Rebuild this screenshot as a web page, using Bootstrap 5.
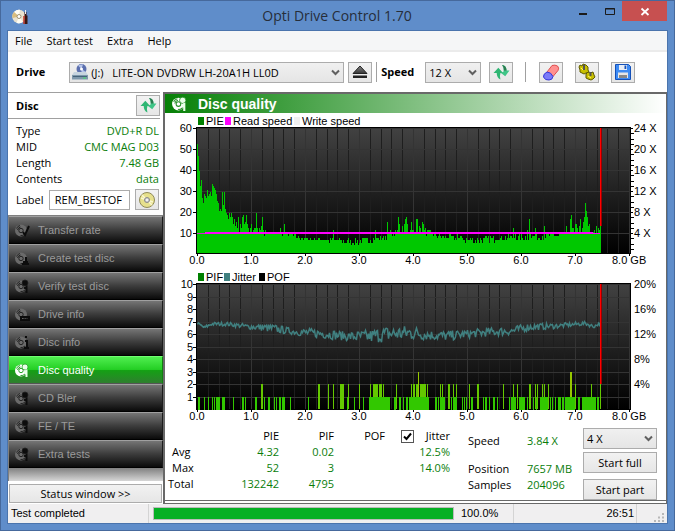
<!DOCTYPE html>
<html lang="en">
<head>
<meta charset="utf-8">
<meta name="viewport" content="width=device-width, initial-scale=1">
<title>Opti Drive Control 1.70</title>
<link rel="stylesheet" href="https://cdn.jsdelivr.net/npm/bootstrap@5.3.0/dist/css/bootstrap.min.css">
<style>
  body { font-family: "Open Sans", "Noto Sans", sans-serif; font-size: 11px; line-height: 16px; color: #000; background: #5f8dca; }
  .app-window { border: 1px solid #46699c; padding: 0 7px 7px; background: #5f8dca; }
  .title-bar { height: 30px; }
  .title-text { font-size: 14px; line-height: 20px; color: #262e3a; padding-left: 80px; }
  .win-btn { border: 0; background: transparent; height: 20px; width: 27px; padding: 0; }
  .win-close { background: #c75050; width: 45px; margin-left: 2px; }
  .client { background: #fff; outline: 1px solid #4a74ad; }
  .menu-bar { background: #f5f6f7; height: 21px; border-bottom: 2px solid #ebebeb; gap: 14px; padding-left: 7px; }
  .menu-bar a { color: #000; text-decoration: none; line-height: 19px; }
  .tool-bar { height: 40px; padding-left: 8px; }
  .tool-btn { width: 24px; height: 21px; border: 1px solid #acacac; background: linear-gradient(#f2f2f2, #e6e6e6); border-radius: 0; padding: 0; display: inline-flex; align-items: center; justify-content: center; flex: none; }
  .tool-sep { width: 1px; height: 20px; background: #a0a0a0; }
  .tool-btn + .tool-sep.wide { margin-left: 12px; }
  .tool-group { gap: 12px; margin-left: 13px; }
  .combo { height: 21px; border: 1px solid #acacac; background: linear-gradient(#f0f0f0, #e5e5e5); }
  .combo .form-select { border: 0; border-radius: 0; padding: 0 16px 0 3px; height: 19px; font-size: 11px; line-height: 19px; color: #000; background-color: transparent; background-size: 9px 7px; background-position: right 3px center;
    background-image: url("data:image/svg+xml,%3Csvg xmlns='http://www.w3.org/2000/svg' viewBox='0 0 9 7'%3E%3Cpath d='M1 1.5l3.5 3.5L8 1.500' fill='none' stroke='%23606060' stroke-width='2'/%3E%3C/svg%3E"); }
  .drive-combo { width: 275px; padding-left: 2px; }
  .speed-combo { width: 56px; margin-left: 11px; }
  .side { width: 155px; flex: none; }
  .side-head { border-top: 1px solid #a0a0a0; border-bottom: 1px solid #a0a0a0; height: 27px; padding-left: 8px; margin-right: 3px; }
  .info { padding: 4px 4px 5px 8px; }
  .info dt { font-weight: 400; }
  .label-row { margin-top: 2px; }
  .val { color: #0a7d0a; }
  .disc-label { width: 81px; height: 20px; border: 1px solid #acacac; border-radius: 0; padding: 0 5px; font-size: 11px; color: #000; }
  .nav-side { border-top: 1px solid #808080; border-left: 1px solid #808080; background: linear-gradient(#808080, #808080 252px, #dcdcdc 266px); flex: 1 1 auto; }
  .nav-item-btn { display: flex; align-items: center; height: 28px; width: 100%; border: 0; border-top: 1px solid #a0a0a0; border-right: 1px solid #1c1c1c; border-bottom: 1px solid #000; padding: 0 0 0 5px; gap: 8px;
    background: linear-gradient(#757575, #3c3c3c 50%, #0a0a0a); color: #9a9a9a; font-family: "Liberation Sans", Arial, sans-serif; font-size: 11px; text-align: left; }
  .nav-item-btn, .pane-icon { --ring: #222; --mark: #0c0c0c; }
  .nav-item-btn svg { color: #6a6a6a; }
  .nav-item-btn.active { background: linear-gradient(#50ee50, #24cf24 48%, #15a015 52%, #2f7f2f); border-color: #70ff70 #108010 #555; color: #fff; }
  .nav-item-btn.active svg { color: #fff; --ring: #27a527; --mark: #e8ffe8; }
  .pane-icon { color: #fff; --ring: #2a922a; --mark: #e8ffe8; }
  .status-btn { height: 19px; border: 1px solid #acacac; background: linear-gradient(#f2f2f2, #e6e6e6); padding: 0; line-height: 17px; border-radius: 0; color: #000; margin: 3px 1px 1px; }
  .run-controls { width: 74px; gap: 3px; }
  .action-btn { height: 21px; border: 1px solid #acacac; background: linear-gradient(#f2f2f2, #e6e6e6); padding: 0; line-height: 18px; border-radius: 0; color: #000; }
  .action-btn + .action-btn { margin-top: 3px; }
  .main-pane { border: solid #696969; border-width: 2px 1px 1px 2px; padding-bottom: 2px; min-width: 0; }
  .pane-inner { border-bottom: 1px solid #696969; }
  .pane-title { height: 19px; background: linear-gradient(90deg, #068006, #5bac5b 35%, #fff); color: #fff; font-family: "Liberation Sans", Arial, sans-serif; font-weight: 700; font-size: 14px; line-height: 18px; gap: 10px; padding-left: 6px; }
  .chart { display: block; width: 100%; height: auto; font-family: "Liberation Sans", Arial, sans-serif; font-size: 11px; }
  .stats th { font-weight: 400; }
  .stats td, .stats th { padding: 0; height: 16px; text-align: right; }
  .stats tbody th { text-align: left; }
  .stats-area { padding: 5px 9px 0 3px; }
  .c-name { width: 30px; }
  .c-pie { width: 81px; }
  .c-pif { width: 55px; }
  .c-pof { width: 51px; }
  .c-jit { width: 65px; }
  .stats .jitter-check { width: 13px; height: 13px; margin: 0; border: 1px solid #555; border-radius: 0; background-size: 11px; background-color: #fff; }
  .stats .jitter-check:checked { background-color: #fff; border-color: #555;
    background-image: url("data:image/svg+xml,%3Csvg xmlns='http://www.w3.org/2000/svg' viewBox='0 0 11 11'%3E%3Cpath d='M2 5.500l2.500 2.500L9 2.500' fill='none' stroke='%23000' stroke-width='2'/%3E%3C/svg%3E"); }
  .run-info { display: grid; grid-template-columns: 59px auto; grid-template-rows: 28px 16px 16px; padding-top: 5px; margin-right: 11px; }
  .status-bar { height: 19px; background: #f0eff0; font-family: "Liberation Sans", Arial, sans-serif; line-height: 19px; }
  .status-bar .cell { border-right: 1px solid #d4d4d4; }
  .status-bar .state { width: 141px; padding-left: 3px; }
  .status-bar .percent { width: 60px; padding-left: 7px; }
  .status-bar .clock { width: 123px; padding-right: 2px; text-align: right; }
  .test-progress { height: 13px; border: 1px solid #bcbcbc; border-radius: 0; background: #e6e6e6; }
  .test-progress .progress-bar { background: #06b025; }
</style>
<script src="https://cdn.jsdelivr.net/npm/bootstrap@5.3.0/dist/js/bootstrap.bundle.min.js"></script>
</head>
<body>
<svg width="0" height="0" class="position-absolute" aria-hidden="true">
  <symbol id="refresh" viewBox="0 0 16 16">
    <path d="M5 3.500L0.500 8.500H3.500Q3.500 13 7 14.500Q6 11 7 8.500H9.500z" fill="#2fb673"/>
    <path d="M8.500 1Q12.500 1.500 12.800 6H15.500L11.500 11.500L7.500 8.500L10 7Q10.500 3 8.500 1z" fill="#3fc587"/>
    <path d="M8.500 1Q12.500 1.500 12.800 6L10.300 6Q10.500 3 8.500 1z" fill="#2a7d50"/>
  </symbol>
  <symbol id="disc" viewBox="0 0 16 16">
    <circle cx="7" cy="8.500" r="6" fill="currentColor"/>
    <circle cx="7" cy="8.500" r="2.200" fill="none" stroke="var(--ring)" stroke-width="1"/>
    <path d="M2.500 6.500Q3.500 4 6 3.500M11 12Q9 14 6.500 13.500M3.500 8Q4 5.500 6.500 5" fill="none" stroke="var(--ring)"/>
  </symbol>
  <symbol id="lens" viewBox="0 0 16 16">
    <circle cx="11" cy="5" r="3" fill="var(--mark)" stroke="var(--ring)" stroke-width=".8"/>
    <path d="M12.500 7.500V15M10 9.500l2 1" fill="none" stroke="var(--mark)" stroke-width="2"/>
  </symbol>
</svg>

<div class="app-window min-vh-100 d-flex flex-column">
  <header class="title-bar d-flex">
    <svg width="16" height="16" viewBox="0 0 16 16" class="mt-2 ms-1" aria-hidden="true"><circle cx="7" cy="7.500" r="6.800" fill="#e9e2cf"/><path d="M7 7.500L2 3Q5 0 8 .8zM7 7.500L11 13Q7 15.500 4.500 13.800z" fill="#fffdf4"/><path d="M7 7.500L.5 9Q0 5 2 3z" fill="#d9bd7e"/><circle cx="7" cy="7.500" r="2" fill="#fff" stroke="#a09472"/><path d="M12.500 3h2v3.500h1V15h-3z" fill="#3b1712"/><path d="M12 7v8" stroke="#c13626" stroke-width="1.500"/><path d="M13.500 1v4" stroke="#eee"/></svg>
    <div class="title-text flex-grow-1 text-center align-self-center">Opti Drive Control 1.70</div>
    <button class="win-btn" type="button" aria-label="Minimize"><svg width="27" height="20" viewBox="0 0 27 20"><path d="M13 12h8v2h-8z" fill="#1b1b1b"/></svg></button>
    <button class="win-btn" type="button" aria-label="Maximize"><svg width="27" height="20" viewBox="0 0 27 20"><path d="M12.500 7.500h9v6h-9zM12 8h10" fill="none" stroke="#1b1b1b"/></svg></button>
    <button class="win-btn win-close" type="button" aria-label="Close"><svg width="45" height="20" viewBox="0 0 45 20"><path d="M19.500 7.500l7 6.500M26.500 7.500l-7 6.500" stroke="#fff" stroke-width="1.800"/></svg></button>
  </header>

  <div class="client flex-grow-1 d-flex flex-column">
    <nav class="menu-bar d-flex" aria-label="Main menu">
      <a href="#">File</a><a href="#">Start test</a><a href="#">Extra</a><a href="#">Help</a>
    </nav>

    <div class="tool-bar d-flex align-items-center">
      <label class="fw-bold" for="drive">Drive</label>
      <div class="combo drive-combo d-flex align-items-center ms-4">
        <svg width="16" height="16" viewBox="0 0 16 16" class="flex-shrink-0" aria-hidden="true"><circle cx="9.500" cy="5" r="5" fill="#5b6fae"/><path d="M9.500 5L6 1.500Q9 0 11 .5zM9.500 5L14 8Q12 10.500 9.500 10z" fill="#b6c4ea"/><circle cx="9.500" cy="5" r="1.500" fill="#fff"/><path d="M2 8h12l2 3H0z" fill="#c7d4df"/><path d="M0 11h16v4.500H0z" fill="#7f98ac"/><path d="M1 12h14v1H1z" fill="#46637a"/><path d="M11 13.500h3v1h-3z" fill="#42e065"/></svg>
        <select id="drive" class="form-select"><option>(J:) &nbsp; LITE-ON DVDRW LH-20A1H LL0D</option></select>
      </div>
      <button class="tool-btn ms-1 me-1" type="button" aria-label="Eject"><svg width="16" height="14" viewBox="0 0 16 14"><defs><linearGradient id="ej" x1="0" y1="0" x2="0" y2="1"><stop offset="0" stop-color="#888"/><stop offset="1" stop-color="#333"/></linearGradient></defs><path d="M8 1L15 8.500H1z" fill="url(#ej)" stroke="#222"/><path d="M1 10.500h14v2.500H1z" fill="#222"/></svg></button>
      <span class="tool-sep me-1"></span>
      <label class="fw-bold" for="speed">Speed</label>
      <div class="combo speed-combo"><select id="speed" class="form-select"><option>12 X</option></select></div>
      <button class="tool-btn ms-2" type="button" aria-label="Refresh"><svg width="17" height="17"><use href="#refresh"/></svg></button>
      <span class="tool-sep wide"></span>
      <div class="tool-group d-flex">
        <button class="tool-btn" type="button" aria-label="Erase"><svg width="18" height="17" viewBox="0 0 18 17"><path d="M5 8L10 1.500Q13 .5 15.500 2Q17.500 4 16 6.500L11 12.500z" fill="#ff9090" stroke="#e05050" stroke-width="1"/><path d="M5 8Q9 8 11 12.500Q10.500 16 7 16Q3 16.500 1.500 13Q1 10 5 8z" fill="#7a7af8" stroke="#3636d8"/></svg></button>
        <button class="tool-btn" type="button" aria-label="Options"><svg width="18" height="18" viewBox="0 0 18 18"><g stroke="#5e5a00" stroke-width="1" fill="#c9c000"><path d="M1 4l1-2 2 1 1-2 3 1 2 2v3l1 2-3 1-2 1-2-1-2-1v-2z"/><path d="M8 11l2-2 2 1 3-1 1 3 1 2-2 2-2 1-3-1-2-1z"/></g><path d="M6 2v5M12.500 9v4" stroke="#555" stroke-width="2"/><path d="M3 5l2 2M10 13l3 2" stroke="#fff36a"/></svg></button>
        <button class="tool-btn" type="button" aria-label="Save"><svg width="16" height="16" viewBox="0 0 16 16"><path d="M.5 .5h13l2 2v13H.5z" fill="#3d8bf4" stroke="#1450b8"/><path d="M4 1h8v5H4z" fill="#e8edf5"/><path d="M9.500 1.500h1.800v3.500H9.500z" fill="#1450b8"/><path d="M3 8.500h10V14H3z" fill="#e6e6e6"/><path d="M4 11h8v3H4z" fill="#888"/></svg></button>
      </div>
    </div>

    <div class="d-flex flex-grow-1">
      <aside class="side d-flex flex-column">
        <div class="side-head d-flex align-items-center justify-content-between">
          <strong>Disc</strong>
          <button class="tool-btn" type="button" aria-label="Reload disc"><svg width="17" height="17"><use href="#refresh"/></svg></button>
        </div>
        <div class="info">
          <dl class="m-0">
            <div class="d-flex justify-content-between"><dt>Type</dt><dd class="val m-0">DVD+R DL</dd></div>
            <div class="d-flex justify-content-between"><dt>MID</dt><dd class="val m-0">CMC MAG D03</dd></div>
            <div class="d-flex justify-content-between"><dt>Length</dt><dd class="val m-0">7.48 GB</dd></div>
            <div class="d-flex justify-content-between"><dt>Contents</dt><dd class="val m-0">data</dd></div>
          </dl>
          <div class="label-row d-flex align-items-center justify-content-between">
            <label for="discLabel">Label</label>
            <input id="discLabel" class="disc-label" type="text" value="REM_BESTOF">
            <button class="tool-btn" type="button" aria-label="Disc label"><svg width="16" height="16" viewBox="0 0 16 16"><circle cx="8" cy="8" r="7.500" fill="#e6e08c" stroke="#8f8a5a"/><path d="M8 8L3 3M8 8l5 5M8 8L2 6M8 8l6 2" stroke="#fbf8d0" stroke-width="1.500"/><circle cx="8" cy="8" r="2.500" fill="#d0d0d0" stroke="#888"/><circle cx="8" cy="8" r="1" fill="#fff"/></svg></button>
          </div>
        </div>
        <nav class="nav-side" id="tests" aria-label="Tests"></nav>
        <button class="status-btn" type="button">Status window &gt;&gt;</button>
      </aside>

      <main class="main-pane flex-grow-1 d-flex flex-column">
        <div class="pane-inner flex-grow-1">
          <h1 class="pane-title d-flex align-items-center m-0"><svg class="pane-icon" width="17" height="17"><use href="#disc"/><use href="#lens"/></svg>Disc quality</h1>
          <svg class="chart" id="chartPie" viewBox="165 113 501 154" role="img" aria-label="PIE errors and read speed"></svg>
          <svg class="chart" id="chartPif" viewBox="165 267 501 156" role="img" aria-label="PIF errors and jitter"></svg>
          <div class="stats-area d-flex align-items-start">
            <table class="stats me-auto">
              <thead><tr><th class="c-name"></th><th class="c-pie">PIE</th><th class="c-pif">PIF</th><th class="c-pof">POF</th><th class="c-jit"><label class="d-flex align-items-center justify-content-between ps-3"><input class="form-check-input jitter-check" type="checkbox" checked>Jitter</label></th></tr></thead>
              <tbody>
                <tr><th class="ps-1">Avg</th><td class="val">4.32</td><td class="val">0.02</td><td></td><td class="val">12.5%</td></tr>
                <tr><th class="ps-1">Max</th><td class="val">52</td><td class="val">3</td><td></td><td class="val">14.0%</td></tr>
                <tr><th>Total</th><td class="val">132242</td><td class="val">4795</td><td></td><td></td></tr>
              </tbody>
            </table>
            <div class="run-info">
              <span>Speed</span><span class="val">3.84 X</span>
              <span>Position</span><span class="val">7657 MB</span>
              <span>Samples</span><span class="val">204096</span>
            </div>
            <div class="run-controls d-flex flex-column">
              <div class="combo"><select class="form-select" aria-label="Test speed"><option>4 X</option></select></div>
              <button class="action-btn" type="button">Start full</button>
              <button class="action-btn" type="button">Start part</button>
            </div>
          </div>
        </div>
      </main>
    </div>

    <footer class="status-bar d-flex align-items-center">
      <span class="cell state">Test completed</span>
      <div class="progress test-progress flex-grow-1 ms-1" role="progressbar" aria-label="Test progress" aria-valuenow="100" aria-valuemin="0" aria-valuemax="100"><div class="progress-bar w-100"></div></div>
      <span class="cell percent">100.0%</span>
      <span class="cell clock">26:51</span>
      <svg width="30" height="19" viewBox="0 0 30 19" aria-hidden="true"><path d="M25 9h2v2h-2zM21 12.500h2v2h-2zM25 12.500h2v2h-2zM17 16h2v2h-2zM21 16h2v2h-2zM25 16h2v2h-2z" fill="#b8b8b8"/></svg>
    </footer>
  </div>
</div>
<script>
  // Side navigation
  var tests = [["Transfer rate", "M9 10l2 3 4-9"], ["Create test disc", "M8 14h7M9 12h5M12 7v6"], ["Verify test disc"], ["Drive info", "M7 11h8v3H7z"], ["Disc info", "M11 3h2M11 7h2v7M10 14h5"], ["Disc quality"], ["CD Bler"], ["FE / TE"], ["Extra tests"]];
  document.getElementById("tests").innerHTML = tests.map(function (t) {
    var mark = t[1] ? '<path d="' + t[1] + '" fill="none" stroke="var(--mark)" stroke-width="2"/>' : '<use href="#lens"/>';
    return '<button type="button" class="nav-item-btn' + (t[0] === "Disc quality" ? " active" : "") + '"><svg width="16" height="16" viewBox="0 0 16 16"><use href="#disc"/>' + mark + '</svg><span>' + t[0] + '</span></button>';
  }).join("");

  // Repeatable noise in the range 0..1
  var seed = 7;
  function rnd() { seed = (seed * 16807) % 2147483647; return seed / 2147483647; }
  function lerp(pts, x) {
    for (var k = 1; k < pts.length; k++) if (x <= pts[k][0]) {
      var a = pts[k - 1], b = pts[k], f = (x - a[0]) / (b[0] - a[0]);
      return a.map(function (v, n) { return v + (b[n] - v) * f; });
    }
    return pts[pts.length - 1];
  }
  function rect(x, y, w, h, c) { return '<rect x="' + x + '" y="' + y + '" width="' + w + '" height="' + h + '" fill="' + c + '"/>'; }
  function text(x, y, s, anchor) { return '<text x="' + x + '" y="' + y + '" text-anchor="' + (anchor || "start") + '">' + s + '</text>'; }
  var X0 = 197;

  function frame(id, top, height, rows, rowStep) {
    var s = '<defs><linearGradient id="' + id + '" x1="0" y1="0" x2="0" y2="1"><stop offset="0" stop-color="#424242"/><stop offset="1" stop-color="#000"/></linearGradient></defs>';
    s += rect(196, top, 435, height, "#000") + rect(197, top + 1, 433, height - 2, "url(#" + id + ")");
    for (var m = 1; m < 40; m++) if (m % 5) s += rect(Math.round(X0 + m * 10.8), top + 1, 1, height - 2, "#1e1e1e");
    for (var r = 0; r < rows; r++) s += rect(197, Math.round(top + 1 + r * rowStep), 433, 1, "#343434");
    for (var g = 0; g < 9; g++) {
      if (g) s += rect(X0 + g * 54, top + 1, 1, height - 2, "#343434");
      s += rect(X0 + g * 54, top + height, 1, 2, "#000");
      s += g < 8 ? text(X0 + g * 54, top + height + 10, g + ".0", "middle") : text(612, top + height + 10, "8.0 GB");
    }
    return s;
  }
  function legend(y, items) {
    return items.map(function (i) { return rect(i[0], y - 8, 6, 8, i[1]) + text(i[0] + 8, y, i[2]); }).join("");
  }

  // PIE chart
  var head = [52,46,39,32,35,26,24,28,27,26,30,27,28,29,27,33,32,31,30,28,25,24,20,21,20,29,23,29,21,19,18,16,19,17,19,17,14,16,13,15,12,17,10,14,12,17,18,14,15,18,14,12,10,12,14,10,11,12,12,19,12,10,12,11,13,17,11];
  var base = [[66,9,3],[90,8,3],[105,6.500,1.500],[130,5.500,2],[160,4.500,3],[185,6,3],[200,9,3],[226,9,4],[240,7,3],[258,6,3],[275,5,3],[300,6,3],[330,6,4],[355,7,3],[370,8,3],[380,9,5],[395,9,2],[404,9,3]];
  var peaks = {83:12,87:14,136:11,178:11,190:15,193:11,201:17,202:14,205:13,207:14,208:16,209:17,210:14,214:15,219:16,220:16,222:13,225:15,226:14,260:10,316:12,318:10,330:11,332:16,333:10,338:12,347:13,369:13,373:16,374:18,378:14,379:14,380:12,382:13,383:16,386:15,387:17,388:24,389:20,390:17,391:13,392:14,397:11,399:13,401:12,403:13};
  var s = frame("g1", 127, 127, 6, 21);
  var d = "M197 253";
  for (var i = 0; i < 404; i++) {
    var b = lerp(base, Math.max(i, 66));
    var v = peaks[i] || (i < head.length ? head[i] : Math.round(b[1] + rnd() * b[2] - 0.5));
    d += "V" + Math.round(253 - v * 2.1) + "h1";
  }
  s += '<path d="' + d + 'V253z" fill="#00c800" shape-rendering="crispEdges"/>';
  s += rect(197, 233, 8, 1, "#c832c8") + rect(205, 232, 388, 2, "#f0f") + rect(593, 233, 7, 1, "#f0f") + rect(600, 128, 1, 98, "#f00") + rect(601, 128, 1, 98, "#900");
  for (var r = 0; r < 6; r++) {
    s += rect(193, 128 + r * 21, 4, 1, "#000") + text(192, 132 + r * 21, 60 - r * 10, "end");
    s += text(634, 132 + r * 21, (24 - r * 4) + " X");
  }
  for (var t = 0; t < 24; t++) s += rect(631, Math.round(128 + t * 5.25), t % 4 ? 3 : 2, 1, "#000");
  s += legend(125, [[198, "#008000", "PIE"], [225, "#f0f", "Read speed"], [294, "#f0f0f0", "Write speed"]]);
  document.getElementById("chartPie").innerHTML = s;

  // PIF chart: [first column, column count] for each error count
  var ones = [[1,2],[7,1],[11,1],[15,1],[17,1],[19,4],[25,3],[36,1],[45,2],[48,1],[58,2],[67,1],[71,2],[77,1],[79,1],[82,2],[85,3],[93,1],[111,1],[150,1],[157,1],[166,1],[172,21],[197,2],[202,2],[206,1],[209,2],[212,20],[238,2],[241,1],[243,5],[254,1],[256,4],[265,1],[267,1],[269,1],[274,2],[286,1],[288,2],[292,1],[296,2],[300,1],[312,1],[314,5],[322,6],[330,1],[336,1],[339,1],[343,8],[353,1],[355,1],[358,1],[361,3],[365,2],[368,10],[381,2],[385,14],[400,2]];
  var twos = [[64,2],[121,2],[131,1],[136,1],[143,4],[151,1],[162,1],[173,1],[176,5],[182,3],[186,1],[199,1],[214,1],[216,2],[219,3],[223,6],[230,1],[243,1],[245,1],[251,2],[256,1],[259,1],[272,1],[280,2],[306,1],[316,1],[320,1],[332,2],[338,1],[340,1],[345,1],[347,1],[351,1],[378,1],[394,1],[403,1]];
  var threes = [[221,1],[373,2]];
  s = frame("g2", 283, 127, 10, 12.5);
  function bars(list, n, c) { list.forEach(function (q) { s += rect(X0 + q[0], Math.round(409 - n * 12.5), q[1], Math.round(n * 12.5), c); }); }
  bars(twos, 2, "#64c800"); bars(threes, 3, "#96c800"); bars(ones, 1, "#32c800");
  var jit = [[0,6.85,.1],[7,6.5,.15],[14,6.8,.15],[30,6.8,.15],[50,6.6,.2],[75,6.45,.35],[95,6.2,.25],[110,6.1,.35],[130,6,.4],[150,5.8,.35],[172,5.8,.55],[190,6,.65],[215,6.1,.6],[233,5.9,.4],[250,5.85,.4],[270,6,.35],[290,6.15,.35],[315,6.25,.35],[330,6.55,.3],[360,6.65,.2],[388,6.85,.15],[396,6.6,.15],[403,6.85,.1]];
  d = "";
  for (i = 0; i < 404; i++) {
    var j = lerp(jit, i);
    d += (i ? "L" : "M") + (X0 + i + 0.5) + " " + (409 - (j[1] + (rnd() - 0.5) * 2 * j[2]) * 12.5).toFixed(1);
  }
  s += '<path d="' + d + '" fill="none" stroke="#408080" stroke-width="1.5"/>';
  s += rect(600, 284, 1, 100, "#f00") + rect(601, 284, 1, 100, "#900");
  for (r = 0; r < 10; r++) {
    var y = Math.round(284 + r * 12.5);
    s += rect(193, y, 4, 1, "#000") + text(193, y + 4, 10 - r, "end");
    if (r % 2 === 0) s += text(634, y + 4, (20 - r * 2) + "%");
  }
  s += legend(281, [[198, "#008000", "PIF"], [224, "#408080", "Jitter"], [259, "#000", "POF"]]);
  document.getElementById("chartPif").innerHTML = s;
</script>
</body>
</html>
